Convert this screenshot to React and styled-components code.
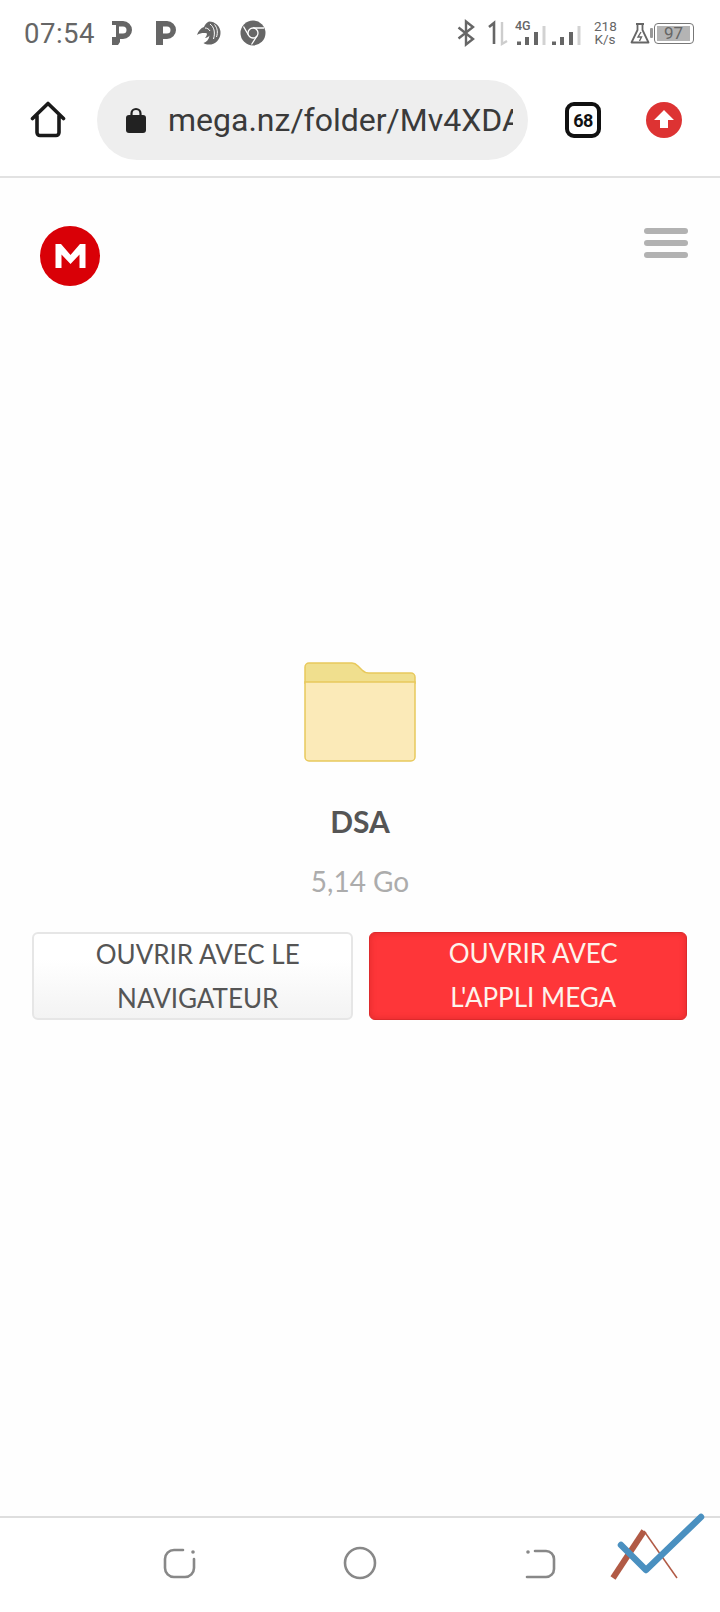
import React from 'react';
import styled, { createGlobalStyle } from 'styled-components';

const GlobalStyle = createGlobalStyle`
  html, body {
    margin: 0;
    padding: 0;
    background: #fefefe;
  }
  * {
    box-sizing: border-box;
  }
`;

const Page = styled.div`
  position: relative;
  width: 720px;
  height: 1612px;
  display: flex;
  flex-direction: column;
  overflow: hidden;
  background: #fefefe;
  font-family: 'Lato', sans-serif;
`;

/* status bar */
const StatusBar = styled.div`
  height: 66px;
  flex: none;
  display: flex;
  align-items: center;
  justify-content: space-between;
  padding: 0 26px 0 24px;
  background: #fff;
  color: #666;
`;

const StatusGroup = styled.div`
  display: flex;
  align-items: center;
`;

const Clock = styled.span`
  width: 70px;
  font-family: 'Roboto', sans-serif;
  font-size: 27.5px;
  letter-spacing: 0.5px;
  margin-right: 18px;
  white-space: nowrap;
`;

const StatusIcon = styled.svg`
  width: ${({ $w }) => $w}px;
  height: 26px;
  margin-right: ${({ $gap }) => $gap}px;
  display: block;
  flex: none;
  overflow: visible;
`;

const Speed = styled.div`
  width: 22px;
  font-family: 'Roboto', sans-serif;
  font-size: 13.5px;
  line-height: 13px;
  text-align: center;
  color: #666;
  margin: 0 14px 0 12px;
`;

const Battery = styled.div`
  position: relative;
  width: 40px;
  height: 21px;
  margin-left: 4px;
  border: 1.5px solid #777;
  border-radius: 4px;
  padding: 2px 3px 2px 2px;
  display: flex;
  &::before {
    content: '';
    position: absolute;
    left: -5px;
    top: 4px;
    width: 3px;
    height: 10px;
    background: #999;
    border-radius: 1px;
  }
`;

const BatteryLevel = styled.div`
  flex: 1;
  background: #b4b4b4;
  color: #666;
  font-family: 'Roboto', sans-serif;
  font-size: 17px;
  line-height: 14px;
  text-align: center;
`;

/* browser toolbar */
const Toolbar = styled.div`
  height: 112px;
  flex: none;
  display: flex;
  align-items: flex-start;
  padding: 14px 0 0 30px;
  background: #fff;
  border-bottom: 2px solid #e2e2e2;
`;

const HomeButton = styled.svg`
  width: 37px;
  height: 37px;
  margin: 21px 30px 0 0;
  flex: none;
`;

const UrlPill = styled.div`
  width: 431px;
  height: 80px;
  flex: none;
  display: flex;
  align-items: center;
  padding: 0 15px 0 29px;
  background: #eeeeee;
  border-radius: 40px;
`;

const LockIcon = styled.svg`
  width: 20px;
  height: 26px;
  flex: none;
  margin-right: 22px;
`;

const UrlText = styled.div`
  flex: 1;
  overflow: hidden;
  white-space: nowrap;
  font-family: 'Roboto', sans-serif;
  font-size: 32px;
  color: #3a3a3a;
`;

const TabCount = styled.div`
  width: 36px;
  height: 36px;
  flex: none;
  margin: 22px 0 0 37px;
  border: 4px solid #111;
  border-radius: 9px;
  display: flex;
  align-items: center;
  justify-content: center;
  font-family: 'Roboto', sans-serif;
  font-weight: 700;
  font-size: 18px;
  letter-spacing: -0.5px;
  color: #111;
  background: #fff;
`;

const UpdateBadge = styled.svg`
  width: 36px;
  height: 36px;
  flex: none;
  margin: 22px 0 0 45px;
`;

/* page content */
const Content = styled.main`
  flex: 1;
  display: flex;
  flex-direction: column;
  align-items: center;
`;

const SiteHeader = styled.div`
  align-self: stretch;
  display: flex;
  justify-content: space-between;
  align-items: flex-start;
  padding: 48px 32px 0 40px;
  height: 484px;
`;

const MegaLogo = styled.svg`
  width: 60px;
  height: 60px;
`;

const MenuButton = styled.div`
  width: 44px;
  margin-top: 2px;
  display: flex;
  flex-direction: column;
  gap: 6px;
`;

const MenuLine = styled.div`
  height: 6px;
  border-radius: 3px;
  background: #b2b2b2;
`;

const FolderIcon = styled.svg`
  width: 112px;
  height: 100px;
  display: block;
`;

const FolderName = styled.div`
  margin-top: 41px;
  font-size: 30px;
  line-height: 36px;
  font-weight: 700;
  color: #555;
`;

const FolderSize = styled.div`
  margin-top: 26px;
  font-size: 28px;
  line-height: 32px;
  color: #acacac;
`;

const ButtonRow = styled.div`
  align-self: stretch;
  display: flex;
  gap: 16px;
  padding: 0 33px 0 32px;
  margin-top: 35px;
`;

const ActionButton = styled.button`
  flex: 1;
  height: 88px;
  padding: 0 32px 0 43px;
  font-family: 'Lato', sans-serif;
  font-size: 26px;
  line-height: 44px;
  border-radius: 6px;
  color: ${({ $primary }) => ($primary ? '#fdf3ec' : '#555')};
  border: ${({ $primary }) => ($primary ? '1px solid #dd2a2c' : '2px solid #e6e6e6')};
  background: ${({ $primary }) =>
    $primary ? '#fe3639' : 'linear-gradient(#ffffff 30%, #f3f3f3)'};
  box-shadow: ${({ $primary }) =>
    $primary ? 'inset 0 0 6px rgba(190, 30, 30, 0.45)' : 'none'};
`;

const ButtonLabel = styled.span`
  display: block;
  transform: translateY(-2px);
`;

/* android nav bar */
const NavBar = styled.div`
  height: 96px;
  flex: none;
  display: flex;
  align-items: center;
  gap: 144px;
  padding: 0 0 4px 162px;
  background: #fff;
  border-top: 2px solid #dedede;
`;

const NavIcon = styled.svg`
  width: 36px;
  height: 36px;
  flex: none;
`;

const CheckMark = styled.svg`
  position: absolute;
  left: 606px;
  top: 1510px;
  width: 104px;
  height: 76px;
`;

const App = () => (
  <>
    <GlobalStyle />
    <Page>
      <StatusBar>
        <StatusGroup>
          <Clock>07:54</Clock>
          <StatusIcon $w={20} $gap={24} viewBox="0 0 20 26">
            <path fillRule="evenodd" d="M0 1h11a9 9 0 0 1 0 18H8v3l-2 3H0v-8h4V5H0zM7 6.500v7h4a3.500 3.500 0 0 0 0-7z" fill="#666" />
          </StatusIcon>
          <StatusIcon $w={20} $gap={21} viewBox="0 0 20 26">
            <path fillRule="evenodd" d="M0 1h11a9 9 0 0 1 0 18H7v6H0zM7 6.500v7h4a3.500 3.500 0 0 0 0-7z" fill="#666" />
          </StatusIcon>
          <StatusIcon $w={24} $gap={19} viewBox="0 0 24 26">
            <path d="M12 1.500a11.500 11.500 0 0 1 0 23c-2 0-4-.5-5.500-1.500 3-1 5.500-3.500 6-7.500-1 1.500-3 2.500-4.500 2.500 1-1 2-3 2-4.500-3-1-6.500-.5-10 1.500 1-4 4-7 7-8 1-2.500 2.500-4.500 5-5.500z" fill="#666" />
            <path d="M13 4c4 3 5.500 8 3.500 15M17.500 4.500c3 3.500 3.500 8 2 12.500M8 8c2 0 4 1 5 3" stroke="#fff" strokeWidth="1" fill="none" />
          </StatusIcon>
          <StatusIcon $w={26} $gap={0} viewBox="0 0 26 26">
            <circle cx="13" cy="13" r="12.500" fill="#666" />
            <path d="M13 8h11M8.700 15.500 3.500 6.500M17.300 15.500 11.500 24.500" stroke="#fff" strokeWidth="1.300" />
            <circle cx="13" cy="13" r="5" fill="#666" stroke="#fff" strokeWidth="1.300" />
          </StatusIcon>
        </StatusGroup>
        <StatusGroup>
          <StatusIcon $w={18} $gap={14} viewBox="0 0 18 26">
            <path d="M1.500 7.500l14.500 11.500-7 5.500V1.500l7 5.500L1.500 18.500" stroke="#666" strokeWidth="2.400" fill="none" />
          </StatusIcon>
          <StatusIcon $w={18} $gap={8} viewBox="0 0 18 26">
            <path d="M0 7l5-4v21" stroke="#666" strokeWidth="2.600" fill="none" />
            <path d="M13 2v22l5-3" stroke="#cdcdcd" strokeWidth="2.400" fill="none" />
          </StatusIcon>
          <StatusIcon $w={32} $gap={5} viewBox="0 0 32 26">
            <text x="0" y="10" fontFamily="Roboto, sans-serif" fontSize="12.500" fontWeight="500" fill="#666">4G</text>
            <path d="M4 21.500v3.500M12 17v8M21 12v13" stroke="#666" strokeWidth="4" />
            <path d="M29 6v19" stroke="#d2d2d2" strokeWidth="3" />
          </StatusIcon>
          <StatusIcon $w={30} $gap={0} viewBox="0 0 30 26">
            <path d="M2 21.500v3.500M10 17v8M19 12v13" stroke="#666" strokeWidth="4" />
            <path d="M27 6v19" stroke="#d2d2d2" strokeWidth="3" />
          </StatusIcon>
          <Speed>218<br />K/s</Speed>
          <StatusIcon $w={20} $gap={0} viewBox="0 0 20 24">
            <path d="M6 3h8M7.500 3v6L1.500 21.500h17L12.500 9V3" stroke="#666" strokeWidth="1.800" fill="none" strokeLinejoin="round" />
            <path d="M11 11l-3 5h3.500l-2 4" stroke="#666" strokeWidth="1.400" fill="none" />
          </StatusIcon>
          <Battery>
            <BatteryLevel>97</BatteryLevel>
          </Battery>
        </StatusGroup>
      </StatusBar>

      <Toolbar>
        <HomeButton viewBox="0 0 37 37">
          <path d="M2.500 17.500 18 2.500 33.500 17.500M7 14.500v17a3 3 0 0 0 3 3h16a3 3 0 0 0 3-3v-17" stroke="#1a1a1a" strokeWidth="3.600" fill="none" strokeLinecap="round" strokeLinejoin="round" />
        </HomeButton>
        <UrlPill>
          <LockIcon viewBox="0 0 20 26">
            <path d="M5.500 9V6.500a4.500 4.500 0 0 1 9 0V9" stroke="#222" strokeWidth="2.200" fill="none" />
            <rect x="0" y="8" width="20" height="18" rx="3" fill="#222" />
          </LockIcon>
          <UrlText>mega.nz/folder/Mv4XDAxJ</UrlText>
        </UrlPill>
        <TabCount>68</TabCount>
        <UpdateBadge viewBox="0 0 36 36">
          <circle cx="18" cy="18" r="18" fill="#dd3333" />
          <path d="M18 8 28 18h-6v8h-8v-8H8z" fill="#fff" />
        </UpdateBadge>
      </Toolbar>

      <Content>
        <SiteHeader>
          <MegaLogo viewBox="0 0 60 60">
            <circle cx="30" cy="30" r="30" fill="#d90007" />
            <path d="M15.500 42V18h5.500l9.500 11L40 18h5.500v24h-6V28.500L30.500 38 21.500 28.500V42z" fill="#fff" />
          </MegaLogo>
          <MenuButton>
            <MenuLine />
            <MenuLine />
            <MenuLine />
          </MenuButton>
        </SiteHeader>

        <FolderIcon viewBox="0 0 112 100">
          <path d="M1 21V5a4 4 0 0 1 4-4h43c3 0 4 1 6 3l4 4c2 2 4 3 7 3h42a4 4 0 0 1 4 4v6z" fill="#f0df8e" stroke="#e8c95c" strokeWidth="1.500" />
          <path d="M1 20h110v75a4 4 0 0 1-4 4H5a4 4 0 0 1-4-4z" fill="#fbeab8" stroke="#e8c95c" strokeWidth="1.500" />
        </FolderIcon>
        <FolderName>DSA</FolderName>
        <FolderSize>5,14 Go</FolderSize>
        <ButtonRow>
          <ActionButton><ButtonLabel>OUVRIR AVEC LE NAVIGATEUR</ButtonLabel></ActionButton>
          <ActionButton $primary><ButtonLabel>OUVRIR AVEC L'APPLI MEGA</ButtonLabel></ActionButton>
        </ButtonRow>
      </Content>

      <NavBar>
        <NavIcon viewBox="0 0 36 36">
          <path d="M32 14v9a9 9 0 0 1-9 9H12a9 9 0 0 1-9-9V14a9 9 0 0 1 9-9h9" stroke="#888" strokeWidth="2.600" fill="none" strokeLinecap="round" />
          <circle cx="31" cy="7" r="1.800" fill="#888" />
        </NavIcon>
        <NavIcon viewBox="0 0 36 36">
          <circle cx="18" cy="18" r="15" stroke="#888" strokeWidth="2.600" fill="none" />
        </NavIcon>
        <NavIcon viewBox="0 0 36 36">
          <path d="M13 6h11a8 8 0 0 1 8 8v10a8 8 0 0 1-8 8H5" stroke="#888" strokeWidth="2.600" fill="none" strokeLinecap="round" />
          <circle cx="6" cy="7" r="1.800" fill="#888" />
        </NavIcon>
      </NavBar>

      <CheckMark viewBox="0 0 104 76">
        <path d="M7 68 38 21" stroke="#b15a45" strokeWidth="6" fill="none" />
        <path d="M38 21 71 68" stroke="#b15a45" strokeWidth="1.500" fill="none" />
        <path d="M15 35 40 60 95 7" stroke="#4a90c0" strokeWidth="6.500" fill="none" strokeLinecap="round" strokeLinejoin="round" />
      </CheckMark>
    </Page>
  </>
);

export default App;
